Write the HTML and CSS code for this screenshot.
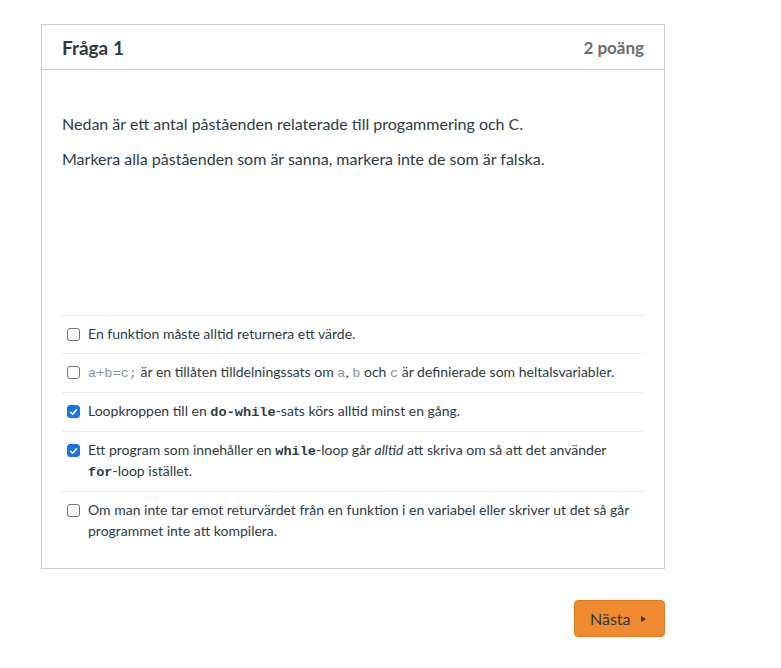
FILE: index.html
```html
<!DOCTYPE html>
<html lang="sv">
<head>
<meta charset="utf-8">
<link rel="stylesheet" href="styles.css">
</head>
<body>
<div class="page">
  <div class="card">
    <div class="card-header">
      <h2 class="title">Fråga 1</h2>
      <span class="points">2 poäng</span>
    </div>
    <div class="card-body">
      <p class="intro">Nedan är ett antal påståenden relaterade till progammering och C.</p>
      <p class="intro">Markera alla påståenden som är sanna, markera inte de som är falska.</p>
      <div class="answers">
        <label class="answer first"><span class="box"></span><span class="atext">En funktion måste alltid returnera ett värde.</span></label>
        <label class="answer"><span class="box"></span><span class="atext"><code class="lite">a+b=c;</code> är en tillåten tilldelningssats om <code class="lite">a</code>, <code class="lite">b</code> och <code class="lite">c</code> är definierade som heltalsvariabler.</span></label>
        <label class="answer"><span class="box checked"><svg viewBox="0 0 14 14" width="14" height="14"><path d="M3.3 7.3 L5.9 9.9 L10.8 4.2" fill="none" stroke="#fff" stroke-width="2" stroke-linecap="round" stroke-linejoin="round"/></svg></span><span class="atext">Loopkroppen till en <code class="bold">do-while</code>-sats körs alltid minst en gång.</span></label>
        <label class="answer"><span class="box checked"><svg viewBox="0 0 14 14" width="14" height="14"><path d="M3.3 7.3 L5.9 9.9 L10.8 4.2" fill="none" stroke="#fff" stroke-width="2" stroke-linecap="round" stroke-linejoin="round"/></svg></span><span class="atext">Ett program som innehåller en <span class="nw"><code class="bold">while</code>-loop</span> går <em>alltid</em> att skriva om så att det använder <span class="nw"><code class="bold">for</code>-loop</span> istället.</span></label>
        <label class="answer"><span class="box"></span><span class="atext">Om man inte tar emot returvärdet från en funktion i en variabel eller skriver ut det så går programmet inte att kompilera.</span></label>
      </div>
    </div>
  </div>
  <div class="actions">
    <button class="next">Nästa <span class="tri"></span></button>
  </div>
</div>
</body>
</html>
```

FILE: styles.css
```css
* { box-sizing: border-box; }
html, body { margin: 0; padding: 0; background: #fff; }
body {
  font-family: Lato, "Open Sans", "Liberation Sans", sans-serif;
  color: #2d3b45;
}
.page {
  padding: 24px 0 0 41px;
  width: 665px;
}
.card {
  border: 1px solid #c7cdd1;
  width: 624px;
}
.card-header {
  display: flex;
  justify-content: space-between;
  align-items: center;
  height: 45px;
  padding: 0 20px 0 20px;
  border-bottom: 1px solid #c7cdd1;
}
.title {
  margin: 0;
  font-size: 19px;
  font-weight: 700;
  color: #2d3b45;
}
.points {
  font-size: 17px;
  font-weight: 700;
  color: #666f76;
}
.card-body {
  padding: 43px 20px 17px 20px;
}
.intro {
  margin: 0 0 14px 0;
  font-size: 16px;
  line-height: 21px;
}
.answers {
  margin-top: 146px;
  border-top: 1px solid #e8eaec;
}
.answer {
  display: flex;
  align-items: flex-start;
  gap: 8px;
  padding: 7px 0 10px 5px;
  border-bottom: 1px solid #e8eaec;
  font-size: 14px;
  line-height: 21px;
}
.answer.first { padding-bottom: 9px; }
.answer:last-child { border-bottom: none; }
.box {
  flex: none;
  width: 13px;
  height: 13px;
  margin-top: 5px;
  border: 1px solid #6b7780;
  border-radius: 3px;
  display: flex;
  align-items: center;
  justify-content: center;
}
.box.checked {
  background: #1a73e8;
  border-color: #1a73e8;
}
.box svg { display: block; width: 12px; height: 12px; }
.atext { color: #2d3b45; }
.nw { white-space: nowrap; }
code {
  font-family: "Liberation Mono", "DejaVu Sans Mono", monospace;
  font-size: 13.6px;
  line-height: 1;
}
code.lite { color: #8a949c; }
code.bold { font-weight: 700; color: #2d3b45; }
em { font-style: italic; }
.actions {
  display: flex;
  justify-content: flex-end;
  margin-top: 31px;
}
.next {
  display: flex;
  align-items: center;
  gap: 10px;
  height: 37px;
  width: 91px;
  padding: 0 0 0 15px;
  background: #f0892f;
  border: 1px solid #e07a20;
  border-radius: 4px;
  font-family: Lato, "Open Sans", sans-serif;
  font-size: 16px;
  color: #2d3b45;
}
.tri {
  width: 0; height: 0;
  border-left: 5px solid #2d3b45;
  border-top: 3.5px solid transparent;
  border-bottom: 3.5px solid transparent;
}
```
